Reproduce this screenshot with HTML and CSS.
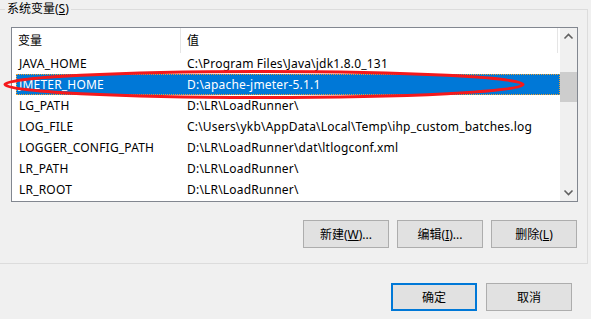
FILE: index.html
```html
<!DOCTYPE html>
<html lang="zh-CN">
<head>
  <meta charset="UTF-8" />
  <title>系统变量</title>
  <link rel="stylesheet" href="styles.css">
</head>
<body>
  <fieldset class="group">
    <legend>系统变量(<u>S</u>)</legend>

    <div class="listbox">
      <div class="list">
        <div class="head">
          <div class="col-name">变量</div>
          <div class="col-value">值</div>
        </div>
        <div class="row"><div class="col-name">JAVA_HOME</div><div class="col-value">C:\Program Files\Java\jdk1.8.0_131</div></div>
        <div class="row selected"><div class="col-name">JMETER_HOME</div><div class="col-value">D:\apache-jmeter-5.1.1</div></div>
        <div class="row"><div class="col-name">LG_PATH</div><div class="col-value">D:\LR\LoadRunner\</div></div>
        <div class="row"><div class="col-name">LOG_FILE</div><div class="col-value">C:\Users\ykb\AppData\Local\Temp\ihp_custom_batches.log</div></div>
        <div class="row"><div class="col-name">LOGGER_CONFIG_PATH</div><div class="col-value">D:\LR\LoadRunner\dat\ltlogconf.xml</div></div>
        <div class="row"><div class="col-name">LR_PATH</div><div class="col-value">D:\LR\LoadRunner\</div></div>
        <div class="row"><div class="col-name">LR_ROOT</div><div class="col-value">D:\LR\LoadRunner\</div></div>
      </div>
      <div class="scrollbar">
        <svg class="arrow" width="17" height="17" viewBox="0 0 17 17"><path d="M4.5 10.5 L8.5 6.5 L12.5 10.5" fill="none" stroke="#606060" stroke-width="1.6"/></svg>
        <div class="thumb-track"><div class="thumb"></div></div>
        <svg class="arrow" width="17" height="17" viewBox="0 0 17 17"><path d="M4.5 6.5 L8.5 10.5 L12.5 6.5" fill="none" stroke="#606060" stroke-width="1.6"/></svg>
      </div>
    </div>

    <div class="actions">
      <button>新建(<u>W</u>)...</button>
      <button>编辑(<u>I</u>)...</button>
      <button>删除(<u>L</u>)</button>
    </div>
  </fieldset>

  <div class="footer">
    <button class="default">确定</button>
    <button>取消</button>
  </div>

  <!-- red mark drawn over the selected row -->
  <svg class="mark" width="591" height="319" viewBox="0 0 591 319">
    <ellipse cx="264" cy="84.5" rx="259" ry="13" fill="none" stroke="#f5191c" stroke-width="3"/>
  </svg>
</body>
</html>
```

FILE: styles.css
```css
body {
  margin: 0;
  width: 591px;
  height: 319px;
  overflow: hidden;
  background: #f0f0f0;
  font-family: "Noto Sans", "Noto Sans CJK SC", sans-serif;
  font-size: 12px;
  color: #000;
  position: relative;
}
.group {
  margin: 0;
  width: 588px;
  height: 264px;
  box-sizing: border-box;
  border: 1px solid #dcdcdc;
  border-left: none;
  padding: 0;
}
.group legend {
  margin-left: 5px;
  padding: 0 2px;
  line-height: 18px;
  color: #000;
}
.listbox {
  display: flex;
  margin-top: 9px;
  margin-left: 11px;
  width: 567px;
  height: 175px;
  box-sizing: border-box;
  border: 1px solid #828790;
  background: #fff;
}
.list {
  flex: 1;
  overflow: hidden;
}
.head {
  display: flex;
  height: 25px;
  align-items: center;
}
.head .col-name {
  width: 169px;
  padding-left: 6px;
  border-right: 1px solid #e5e5e5;
  height: 25px;
  line-height: 25px;
  box-sizing: border-box;
}
.head .col-value {
  width: 377px;
  padding-left: 6px;
  border-right: 1px solid #e5e5e5;
  height: 25px;
  line-height: 25px;
  box-sizing: border-box;
}
.row {
  display: flex;
  height: 21px;
  line-height: 21px;
  margin-left: 4px;
  white-space: nowrap;
  letter-spacing: 0.2px;
}
.row .col-name {
  width: 168px;
  padding-left: 3px;
}
.row .col-value {
  flex: 1;
}
.row.selected {
  background: #0078d7;
  color: #fff;
  outline: 1px dotted #f0a030;
  outline-offset: -1px;
}
.scrollbar {
  width: 17px;
  display: flex;
  flex-direction: column;
  background: #f0f0f0;
}
.arrow {
  display: block;
}
.thumb-track {
  flex: 1;
  padding-top: 27px;
}
.thumb {
  height: 30px;
  background: #cdcdcd;
}
.actions {
  display: flex;
  justify-content: flex-end;
  gap: 8px;
  margin-top: 18px;
  margin-right: 10px;
}
button {
  width: 86px;
  height: 28px;
  background: #e1e1e1;
  border: 1px solid #adadad;
  font-family: inherit;
  font-size: 12px;
  color: #000;
  padding: 0;
}
.footer {
  display: flex;
  justify-content: flex-end;
  gap: 9px;
  margin-top: 19px;
  margin-right: 19px;
}
.footer .default {
  border: 2px solid #0078d7;
}
.mark {
  position: absolute;
  left: 0;
  top: 0;
  pointer-events: none;
}
```
